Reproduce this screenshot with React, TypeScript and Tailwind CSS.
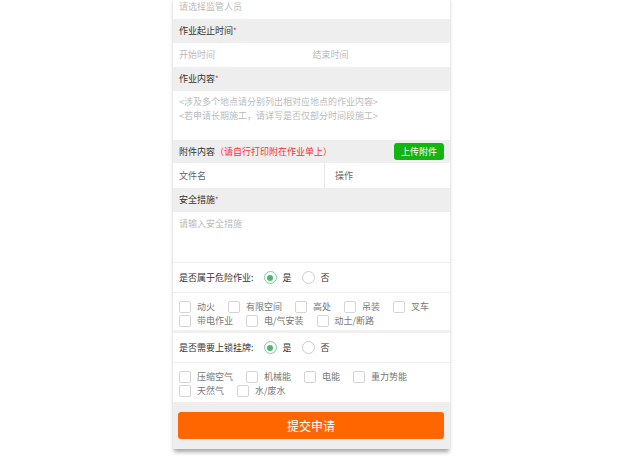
import React from "react";

const Header = ({ children }: { children: React.ReactNode }) => (
  <div className="h-[24px] bg-[#eeeeee] flex items-center pl-[6px] text-[9px] text-[#333333]">
    {children}
  </div>
);

const Star = () => <span className="text-[#ff2222] text-[8px] self-start mt-[6px]">*</span>;

const Radio = ({ checked, label }: { checked?: boolean; label: string }) => (
  <div className="flex items-center">
    <div
      className={
        checked
          ? "w-[13px] h-[13px] rounded-full border border-[#7ccf97] flex items-center justify-center"
          : "w-[13px] h-[13px] rounded-full border border-[#cccccc]"
      }
    >
      {checked && <div className="w-[6px] h-[6px] rounded-full bg-[#4cb86e]" />}
    </div>
    <span className="ml-[6px] text-[9px] text-[#333333]">{label}</span>
  </div>
);

const Check = ({ label }: { label: string }) => (
  <div className="h-[14px] flex items-center mr-[13px]">
    <div className="w-[12px] h-[12px] rounded-[2px] border border-[#d4d4d4] bg-white" />
    <span className="ml-[6px] text-[9px] text-[#777777]">{label}</span>
  </div>
);

export default function App() {
  return (
    <div
      className="h-[458px] overflow-hidden bg-white flex justify-center items-start"
      style={{ fontFamily: '"Noto Sans CJK SC", "Noto Sans", sans-serif' }}
    >
      <div className="w-[277px] -mt-[5px] flex flex-col bg-white shadow-[0_4px_4px_-1px_rgba(0,0,0,0.35)]">
        <div className="h-[24px] flex items-center pl-[6px] text-[9px] text-[#bbbbbb]">请选择监管人员</div>
        <Header>
          作业起止时间<Star />
        </Header>
        <div className="h-[24px] grid grid-cols-2 items-center text-[9px] text-[#bbbbbb]">
          <div className="pl-[6px]">开始时间</div>
          <div className="pl-[1px]">结束时间</div>
        </div>
        <Header>
          作业内容<Star />
        </Header>
        <div className="h-[49px] pt-[4px] pl-[6px] text-[9px] leading-[14px] text-[#bbbbbb]">
          <div>&lt;涉及多个地点请分别列出相对应地点的作业内容&gt;</div>
          <div>&lt;若申请长期施工，请详写是否仅部分时间段施工&gt;</div>
        </div>
        <div className="h-[23px] bg-[#eeeeee] flex items-center justify-between pl-[6px] pr-[6px]">
          <div className="text-[9px] text-[#333333]">
            附件内容<span className="text-[#ff2d2d]">（请自行打印附在作业单上）</span>
          </div>
          <div className="w-[50px] h-[17px] rounded-[3px] bg-[#13b513] text-white text-[9px] flex items-center justify-center">
            上传附件
          </div>
        </div>
        <div className="h-[25px] flex text-[9px] text-[#666666]">
          <div className="w-[152px] pl-[6px] flex items-center border-r border-[#e8e8e8]">文件名</div>
          <div className="pl-[10px] flex items-center">操作</div>
        </div>
        <Header>
          安全措施<Star />
        </Header>
        <div className="h-[51px] pt-[5px] pl-[6px] text-[9px] leading-[14px] text-[#bbbbbb] border-b border-[#eeeeee]">
          请输入安全措施
        </div>
        <div className="h-[30px] flex items-center pl-[6px] border-b border-[#eeeeee]">
          <span className="text-[9px] text-[#333333] mr-[10px]">是否属于危险作业:</span>
          <Radio checked label="是" />
          <div className="w-[10px]" />
          <Radio label="否" />
        </div>
        <div className="pt-[7px] pb-[2px] pl-[6px] flex flex-wrap border-b-[3px] border-[#f0f0f0]">
          <Check label="动火" />
          <Check label="有限空间" />
          <Check label="高处" />
          <Check label="吊装" />
          <Check label="叉车" />
          <Check label="带电作业" />
          <Check label="电/气安装" />
          <Check label="动土/断路" />
        </div>
        <div className="h-[30px] flex items-center pl-[6px] border-b border-[#eeeeee]">
          <span className="text-[9px] text-[#333333] mr-[10px]">是否需要上锁挂牌:</span>
          <Radio checked label="是" />
          <div className="w-[10px]" />
          <Radio label="否" />
        </div>
        <div className="pt-[7px] pb-[4px] pl-[6px] flex flex-wrap w-[277px]">
          <Check label="压缩空气" />
          <Check label="机械能" />
          <Check label="电能" />
          <Check label="重力势能" />
          <div className="w-full" />
          <Check label="天然气" />
          <Check label="水/废水" />
        </div>
        <div className="bg-[#eeeeee] py-[10px] pl-[5px] pr-[6px]">
          <div className="h-[27px] rounded-[3px] bg-[#ff6600] text-white text-[12px] flex items-center justify-center">
            提交申请
          </div>
        </div>
      </div>
    </div>
  );
}
